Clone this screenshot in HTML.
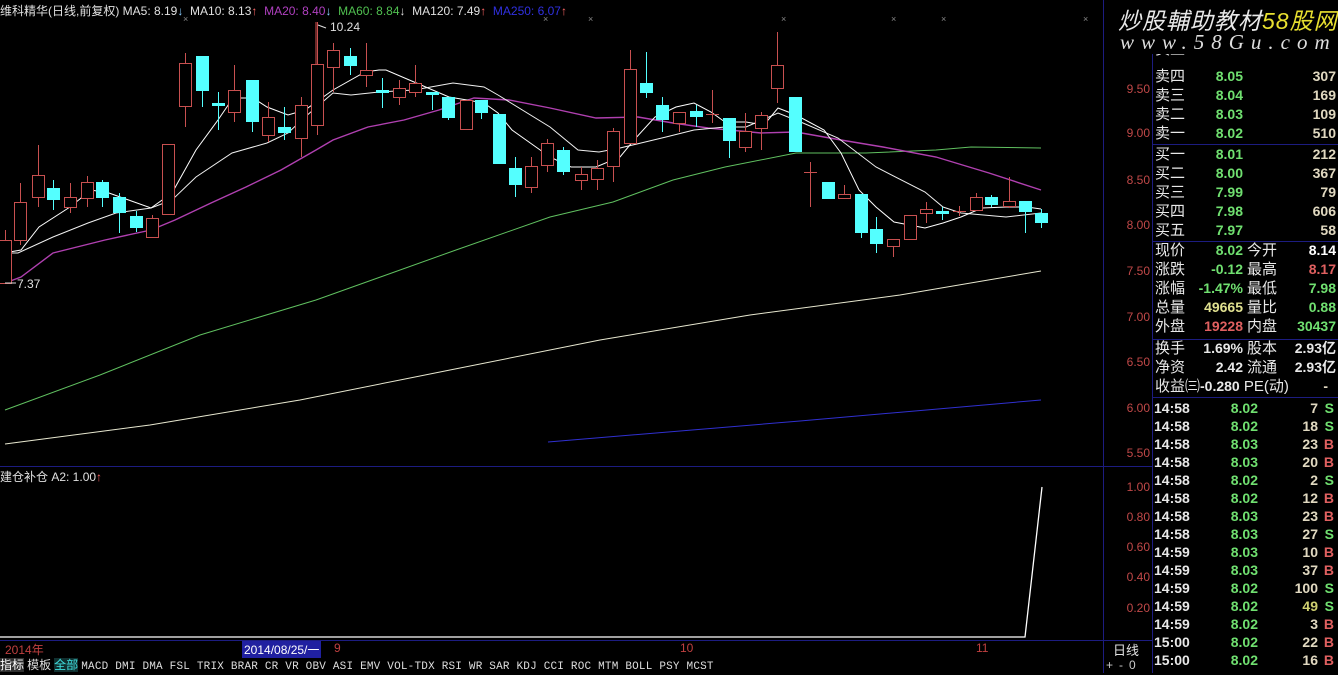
<!DOCTYPE html>
<html><head><meta charset="utf-8">
<style>
*{margin:0;padding:0;box-sizing:border-box}
body{width:1338px;height:673px;background:#000;overflow:hidden;position:relative;font-family:"Liberation Sans","Noto Sans CJK SC",sans-serif;color:#ddd}
.t{position:absolute;white-space:nowrap}
#hdr{left:0;top:2px;font-size:12px;color:#e0e0e0}
.rp{position:absolute;left:1152px;width:186px;font-size:14px}
.row{position:absolute;left:0;width:186px;height:19px;line-height:19px}
.lb{position:absolute;left:3px;font-size:15px;color:#e8e8e8}
.pv{position:absolute;right:95px;text-align:right;font-weight:bold;color:#70e070}
.vv{position:absolute;right:2px;text-align:right;font-weight:bold;color:#e0d8c0}
.lb2{position:absolute;left:95px;font-size:15px;color:#e8e8e8}
.tk{position:absolute;left:0;width:186px;height:18px;line-height:18px;font-weight:bold;font-size:14px}
.tk .tm{position:absolute;left:2px;color:#e8e8e8}
.tk .p{position:absolute;right:80px;color:#70e070}
.tk .v{position:absolute;right:20px;color:#e0d8c0}
.tk .s{position:absolute;right:4px}
.ax{position:absolute;left:1104px;width:46px;text-align:right;font-size:12px;color:#c04848}
#bar{position:absolute;left:0;top:657px;height:16px;width:1100px;font-size:11px;color:#ddd;line-height:16px}
</style></head><body>
<svg id="ch" width="1338" height="673" style="position:absolute;left:0;top:0">
<g stroke="#1c1c80" stroke-width="1" fill="none">
<line x1="1103.5" y1="0" x2="1103.5" y2="673"/>
<line x1="1152.5" y1="0" x2="1152.5" y2="673"/>
<line x1="0" y1="466.5" x2="1152" y2="466.5"/>
<line x1="0" y1="640.5" x2="1152" y2="640.5"/>
<line x1="1152" y1="144.5" x2="1338" y2="144.5"/>
<line x1="1152" y1="241.5" x2="1338" y2="241.5"/>
<line x1="1152" y1="339.5" x2="1338" y2="339.5"/>
<line x1="1152" y1="397.5" x2="1338" y2="397.5"/>
</g>
<g id="lines" fill="none" stroke-width="1"></g>
<g id="cd"></g>
<line x1="316" y1="22" x2="316" y2="64" stroke="#d85050"/>
<path d="M318 25 L326 28" stroke="#ddd"/>
<path d="M5 283 L16 283" stroke="#ddd"/>
<polyline points="0,637 1025,637 1042,487" fill="none" stroke="#fff" stroke-width="1.3"/>
<g fill="#888" font-size="9" font-family="Liberation Sans"><text x="183" y="22">×</text><text x="543" y="22">×</text><text x="588" y="22">×</text><text x="781" y="22">×</text><text x="891" y="22">×</text><text x="941" y="22">×</text><text x="1083" y="22">×</text></g>
</svg>

<div id="hdr" class="t">维科精华(日线,前复权) MA5: 8.19<span style="color:#8cf">↓</span> &nbsp;MA10: 8.13<span style="color:#f66">↑</span> &nbsp;<span style="color:#b040c0">MA20: 8.40</span><span style="color:#8cf">↓</span> &nbsp;<span style="color:#50c050">MA60: 8.84</span><span style="color:#ddd">↓</span> &nbsp;MA120: 7.49<span style="color:#f66">↑</span> &nbsp;<span style="color:#3030e0">MA250: 6.07</span><span style="color:#f66">↑</span></div>
<div class="t" style="left:330px;top:20px;font-size:12px;color:#e0e0e0">10.24</div>
<div class="t" style="left:17px;top:277px;font-size:12px;color:#e0e0e0">7.37</div>
<div class="t" style="left:0;top:468px;font-size:12px;color:#e0e0e0">建仓补仓 A2: 1.00<span style="color:#f66">↑</span></div>

<div class="ax" style="top:82px">9.50</div><div class="ax" style="top:126px">9.00</div><div class="ax" style="top:173px">8.50</div><div class="ax" style="top:218px">8.00</div><div class="ax" style="top:264px">7.50</div><div class="ax" style="top:310px">7.00</div><div class="ax" style="top:355px">6.50</div><div class="ax" style="top:401px">6.00</div><div class="ax" style="top:446px">5.50</div>
<div class="ax" style="top:480px">1.00</div><div class="ax" style="top:510px">0.80</div><div class="ax" style="top:540px">0.60</div><div class="ax" style="top:570px">0.40</div><div class="ax" style="top:601px">0.20</div>

<div class="t" style="left:5px;top:641px;font-size:12px;color:#c04040">2014年</div>
<div class="t" style="left:242px;top:641px;font-size:12px;color:#fff;background:#2020a0;padding:0 2px">2014/08/25/一</div>
<div class="t" style="left:334px;top:641px;font-size:12px;color:#c04040">9</div>
<div class="t" style="left:680px;top:641px;font-size:12px;color:#c04040">10</div>
<div class="t" style="left:976px;top:641px;font-size:12px;color:#c04040">11</div>
<div class="t" style="left:1113px;top:640px;font-size:13px;color:#e0e0e0">日线</div>
<div class="t" style="left:1106px;top:658px;font-size:12px;color:#ccc;letter-spacing:6px">+-0</div>

<div id="bar"><span style="background:#303030;color:#fff;font-size:12px">指标</span> <span style="font-size:12px">模板</span> <span style="color:#40e0e0;font-size:12px;background:#103030">全部</span> <span style="font-family:'Liberation Mono',monospace;font-size:11px;letter-spacing:0.2px">MACD DMI DMA FSL TRIX BRAR CR VR OBV ASI EMV VOL-TDX RSI WR SAR KDJ CCI ROC MTM BOLL PSY MCST</span></div>

<div class="rp" id="q" style="top:0;height:673px"></div>
<div class="rp" style="top:0;height:54px;background:#000">
<div class="t" style="left:-34px;top:2px;font-size:23px;font-style:italic;color:#e8e8e8;letter-spacing:1px">炒股輔助教材<span style="color:#e8e030">58股网</span></div>
<div class="t" style="left:-32px;top:30px;font-size:21px;font-style:italic;color:#ddd;letter-spacing:7px;font-family:'Liberation Serif',serif">www.58Gu.com</div>
</div>

<script>
var q=document.getElementById('q'),h='';
var ob=[['卖五','8.06','211',50],['卖四','8.05','307',77],['卖三','8.04','169',96],['卖二','8.03','109',115],['卖一','8.02','510',134],['买一','8.01','212',155],['买二','8.00','367',174],['买三','7.99','79',193],['买四','7.98','606',212],['买五','7.97','58',231]];
ob.forEach(function(r){h+='<div class="row" style="top:'+(r[3]-10)+'px"><span class="lb">'+r[0]+'</span><span class="pv">'+r[1]+'</span><span class="vv">'+r[2]+'</span></div>'});
var st=[['现价','8.02','#70e070','今开','8.14','#fff',251],['涨跌','-0.12','#70e070','最高','8.17','#e06060',270],['涨幅','-1.47%','#70e070','最低','7.98','#70e070',289],['总量','49665','#e0e090','量比','0.88','#70e070',308],['外盘','19228','#e06060','内盘','30437','#70e070',327],['换手','1.69%','#e8e8e8','股本','2.93亿','#e8e8e8',349],['净资','2.42','#e8e8e8','流通','2.93亿','#e8e8e8',368]];
st.forEach(function(r){h+='<div class="row" style="top:'+(r[6]-10)+'px"><span class="lb">'+r[0]+'</span><span class="pv" style="color:'+r[2]+'">'+r[1]+'</span><span class="lb2">'+r[3]+'</span><span class="vv" style="color:'+r[5]+'">'+r[4]+'</span></div>'});
h+='<div class="row" style="top:377px"><span class="lb" style="color:#e8e8e8">收益㈢<b style="font-size:14px">-0.280</b> PE(动)</span><span class="vv" style="right:10px">-</span></div>';
var tk=[['14:58','8.02','7','S'],['14:58','8.02','18','S'],['14:58','8.03','23','B'],['14:58','8.03','20','B'],['14:58','8.02','2','S'],['14:58','8.02','12','B'],['14:58','8.03','23','B'],['14:58','8.03','27','S'],['14:59','8.03','10','B'],['14:59','8.03','37','B'],['14:59','8.02','100','S'],['14:59','8.02','49','S'],['14:59','8.02','3','B'],['15:00','8.02','22','B'],['15:00','8.02','16','B']];
tk.forEach(function(r,i){var y=399+i*18;h+='<div class="tk" style="top:'+y+'px"><span class="tm">'+r[0]+'</span><span class="p">'+r[1]+'</span><span class="v"'+(r[2]=='49'?' style="color:#d0d070"':'')+'>'+r[2]+'</span><span class="s" style="color:'+(r[3]=='S'?'#70e070':'#e06060')+'">'+r[3]+'</span></div>'});
q.innerHTML=h;

var NS='http://www.w3.org/2000/svg';
function el(p,t,a){var e=document.createElementNS(NS,t);for(var k in a)e.setAttribute(k,a[k]);p.appendChild(e);return e}
var L=document.getElementById('lines');
function pl(pts,c,w){el(L,'polyline',{points:pts,stroke:c,'stroke-width':w||1})}
pl('5,444 150,425 300,400 450,370 600,340 750,315 900,295 1041,271','#e8e8d0');
pl('548,442 800,421 1041,400','#3030d0');
pl('5,410 100,375 200,335 316,300 456,250 550,217 613,202 673,180 725,167 796,153 866,153 936,150 971,147 1041,148','#60c060');
pl('5,283 21,277 53,253 105,240 151,230 175,220 211,203 246,187 281,170 316,150 333,140 368,127 404,120 439,110 474,98 509,100 550,108 596,118 638,117 673,123 708,128 761,133 796,132 841,140 883,147 936,157 989,173 1041,190','#b040b0',1.4);
pl('4,253 18,253 53,237 88,223 116,213 151,208 172,200 196,177 232,153 267,143 288,133 305,117 333,93 351,95 379,92 414,90 453,83 484,87 498,95 550,127 578,150 599,152 620,148 641,143 666,137 694,130 725,127 746,127 778,113 803,123 838,138 876,167 925,192 943,207 961,213 1006,217 1041,213','#f0f0f0');
pl('4,253 21,250 39,227 70,207 91,190 109,193 151,208 172,193 196,150 218,120 233,98 253,98 267,107 288,115 305,110 333,90 365,72 379,70 386,70 414,82 449,97 467,100 484,103 498,113 512,130 550,157 571,167 596,167 620,157 634,140 655,117 676,107 694,103 711,112 725,122 746,122 764,125 778,108 796,115 824,130 841,153 859,190 876,207 894,222 925,228 943,223 961,217 982,208 1006,207 1027,207 1041,209','#ffffff');
var C=document.getElementById('cd');
var d=[[5,240,283,230,283,'r'],[20,202,240,183,245,'r'],[38,175,197,145,207,'r'],[53,188,200,180,210,'c'],[70,197,207,183,213,'r'],[87,182,198,176,207,'r'],[102,182,198,180,207,'c'],[119,197,213,193,233,'c'],[136,216,228,211,232,'c'],[152,218,237,215,238,'r'],[168,144,214,144,214,'r'],[185,63,106,53,127,'r'],[202,56,91,56,107,'c'],[218,104,106,92,130,'c'],[234,90,112,65,122,'r'],[252,80,122,80,132,'c'],[268,117,135,102,142,'r'],[284,127,133,107,140,'c'],[301,105,138,97,157,'r'],[317,64,125,22,135,'r'],[333,50,67,43,92,'r'],[350,56,66,48,75,'c'],[366,70,75,43,87,'r'],[382,91,93,78,108,'c'],[399,88,97,80,105,'r'],[415,83,92,65,97,'r'],[432,93,96,93,110,'c'],[448,97,118,97,120,'c'],[466,100,129,100,130,'r'],[481,100,113,100,119,'c'],[499,114,164,114,164,'c'],[515,168,185,157,197,'c'],[531,166,187,157,193,'r'],[547,143,165,139,172,'r'],[563,150,172,147,175,'c'],[581,174,180,167,190,'r'],[597,168,179,160,190,'r'],[613,131,166,128,182,'r'],[630,69,143,50,143,'r'],[646,83,93,52,98,'c'],[662,105,120,97,132,'c'],[679,112,123,112,132,'r'],[696,111,117,105,127,'c'],[712,114,116,90,123,'r'],[729,118,141,118,158,'c'],[745,131,147,113,152,'r'],[761,115,128,112,150,'r'],[777,65,88,32,103,'r'],[795,97,152,97,152,'c'],[810,172,174,162,207,'r'],[828,182,199,182,199,'c'],[844,194,198,185,198,'r'],[861,194,233,194,238,'c'],[876,229,244,217,253,'c'],[893,239,246,239,257,'r'],[910,215,239,215,239,'r'],[926,209,213,202,223,'r'],[942,212,214,207,220,'c'],[959,211,213,206,216,'r'],[976,197,210,193,210,'r'],[991,197,205,195,207,'c'],[1009,201,206,177,208,'r'],[1025,201,212,201,233,'c'],[1041,213,223,209,228,'c']];
d.forEach(function(k){var x=k[0],col=k[5]=='r'?'#c85050':'#54ffff';
el(C,'line',{x1:x+.5,y1:k[3],x2:x+.5,y2:k[4],stroke:col});
var hgt=Math.max(k[2]-k[1],1);
if(k[5]=='r'){if(hgt<=2)el(C,'line',{x1:x-6,y1:k[1]+.5,x2:x+7,y2:k[1]+.5,stroke:col});else el(C,'rect',{x:x-5.5,y:k[1]+.5,width:12,height:hgt,fill:'#000',stroke:col});}
else{if(hgt<=3)el(C,'rect',{x:x-6,y:k[1]-1,width:13,height:3,fill:col});else el(C,'rect',{x:x-6,y:k[1],width:13,height:hgt,fill:col});}
});
</script>
</body></html>
